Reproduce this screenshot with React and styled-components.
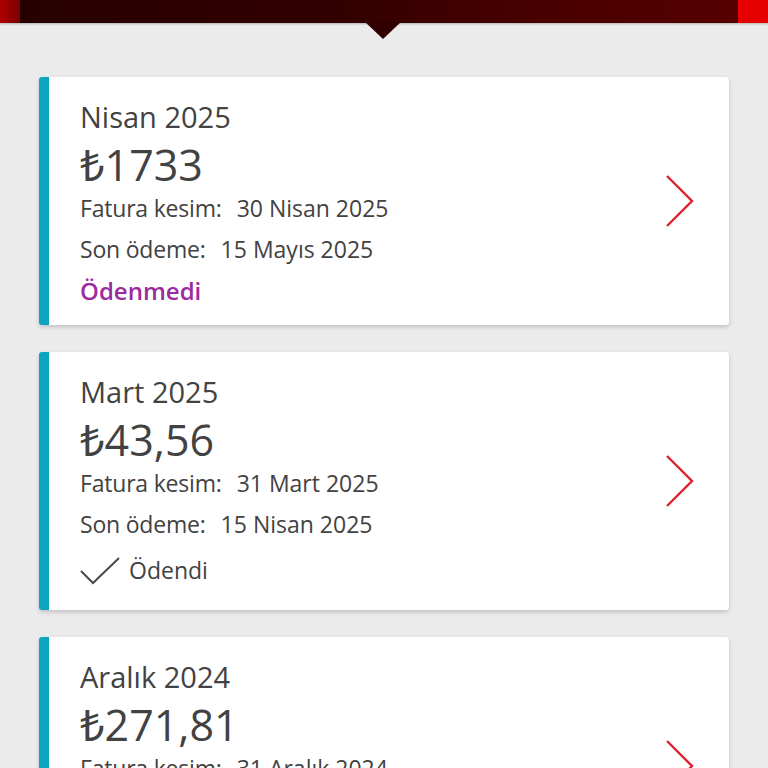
import React from "react";
import styled, { createGlobalStyle } from "styled-components";

const Global = createGlobalStyle`
  html, body { margin: 0; padding: 0; background: #ebebeb; }
  body { font-family: "Open Sans", "Noto Sans", sans-serif; color: #424242; }
`;

const Page = styled.div`
  min-height: 768px;
  background: #ebebeb;
  overflow: hidden;
`;

const Header = styled.div`
  position: relative;
  display: flex;
  height: 23px;
  box-shadow: 0 1px 2px rgba(0, 0, 0, 0.25);
  z-index: 2;
`;

const HeaderSide = styled.div`
  width: ${(p) => p.$w}px;
  background: ${(p) => p.$bg};
`;

const HeaderMid = styled.div`
  flex: 1;
  background: linear-gradient(90deg, #260000 0%, #330000 45%, #4a0000 75%, #560000 100%);
`;

const Pointer = styled.div`
  position: absolute;
  left: 365px;
  top: 22px;
  width: 0;
  height: 0;
  border-left: 18px solid transparent;
  border-right: 18px solid transparent;
  border-top: 17px solid #300000;
`;

const List = styled.div`
  display: flex;
  flex-direction: column;
  gap: 27px;
  padding: 54px 39px 0 39px;
`;

const Card = styled.div`
  display: flex;
  align-items: center;
  background: #fff;
  border-radius: 3px;
  border-left: 10px solid #0ba5c2;
  box-shadow: 0 2px 4px rgba(0, 0, 0, 0.18);
`;

const Body = styled.div`
  flex: 1;
  display: flex;
  flex-direction: column;
  padding: 23px 0 14px 31px;
`;

const Title = styled.div`
  font-size: 29px;
  line-height: 34px;
`;

const Amount = styled.div`
  font-size: 43px;
  line-height: 36px;
  margin-top: 13px;
`;

const Detail = styled.div`
  font-size: 23px;
  line-height: 41px;
  margin-top: ${(p) => (p.$first ? "5px" : "0")};
`;

const Label = styled.span`
  margin-right: 15px;
  letter-spacing: -0.2px;
`;

const Unpaid = styled.div`
  font-size: 24px;
  line-height: 41px;
  font-weight: 600;
  color: #9c2aa0;
`;

const Paid = styled.div`
  display: flex;
  align-items: center;
  gap: 9px;
  font-size: 23px;
  line-height: 41px;
  margin: 5px 0 5px 0;
`;

const Chevron = styled.svg`
  flex: none;
  width: 30px;
  height: 54px;
  margin-right: 34px;
`;

const bills = [
  { month: "Nisan 2025", amount: "₺1733", cut: "30 Nisan 2025", due: "15 Mayıs 2025", paid: false },
  { month: "Mart 2025", amount: "₺43,56", cut: "31 Mart 2025", due: "15 Nisan 2025", paid: true },
  { month: "Aralık 2024", amount: "₺271,81", cut: "31 Aralık 2024", due: "15 Ocak 2025", paid: true },
];

const Check = () => (
  <svg width="40" height="28" viewBox="0 0 40 28" fill="none">
    <polyline points="1,14 13,26 39,1" stroke="#4a4a4a" strokeWidth="2" strokeLinejoin="miter" />
  </svg>
);

export default function App() {
  return (
    <Page>
      <Global />
      <Header>
        <HeaderSide $w={20} $bg="linear-gradient(90deg,#b00000,#7a0000)" />
        <HeaderMid />
        <HeaderSide $w={30} $bg="#e60000" />
        <Pointer />
      </Header>
      <List>
        {bills.map((b) => (
          <Card key={b.month}>
            <Body>
              <Title>{b.month}</Title>
              <Amount>{b.amount}</Amount>
              <Detail $first>
                <Label>Fatura kesim:</Label>
                {b.cut}
              </Detail>
              <Detail>
                <Label>Son ödeme:</Label>
                {b.due}
              </Detail>
              {b.paid ? (
                <Paid>
                  <Check />
                  Ödendi
                </Paid>
              ) : (
                <Unpaid>Ödenmedi</Unpaid>
              )}
            </Body>
            <Chevron viewBox="0 0 30 54">
              <polyline points="2,2 27,27 2,52" fill="none" stroke="#e0202e" strokeWidth="2.4" />
            </Chevron>
          </Card>
        ))}
      </List>
    </Page>
  );
}
